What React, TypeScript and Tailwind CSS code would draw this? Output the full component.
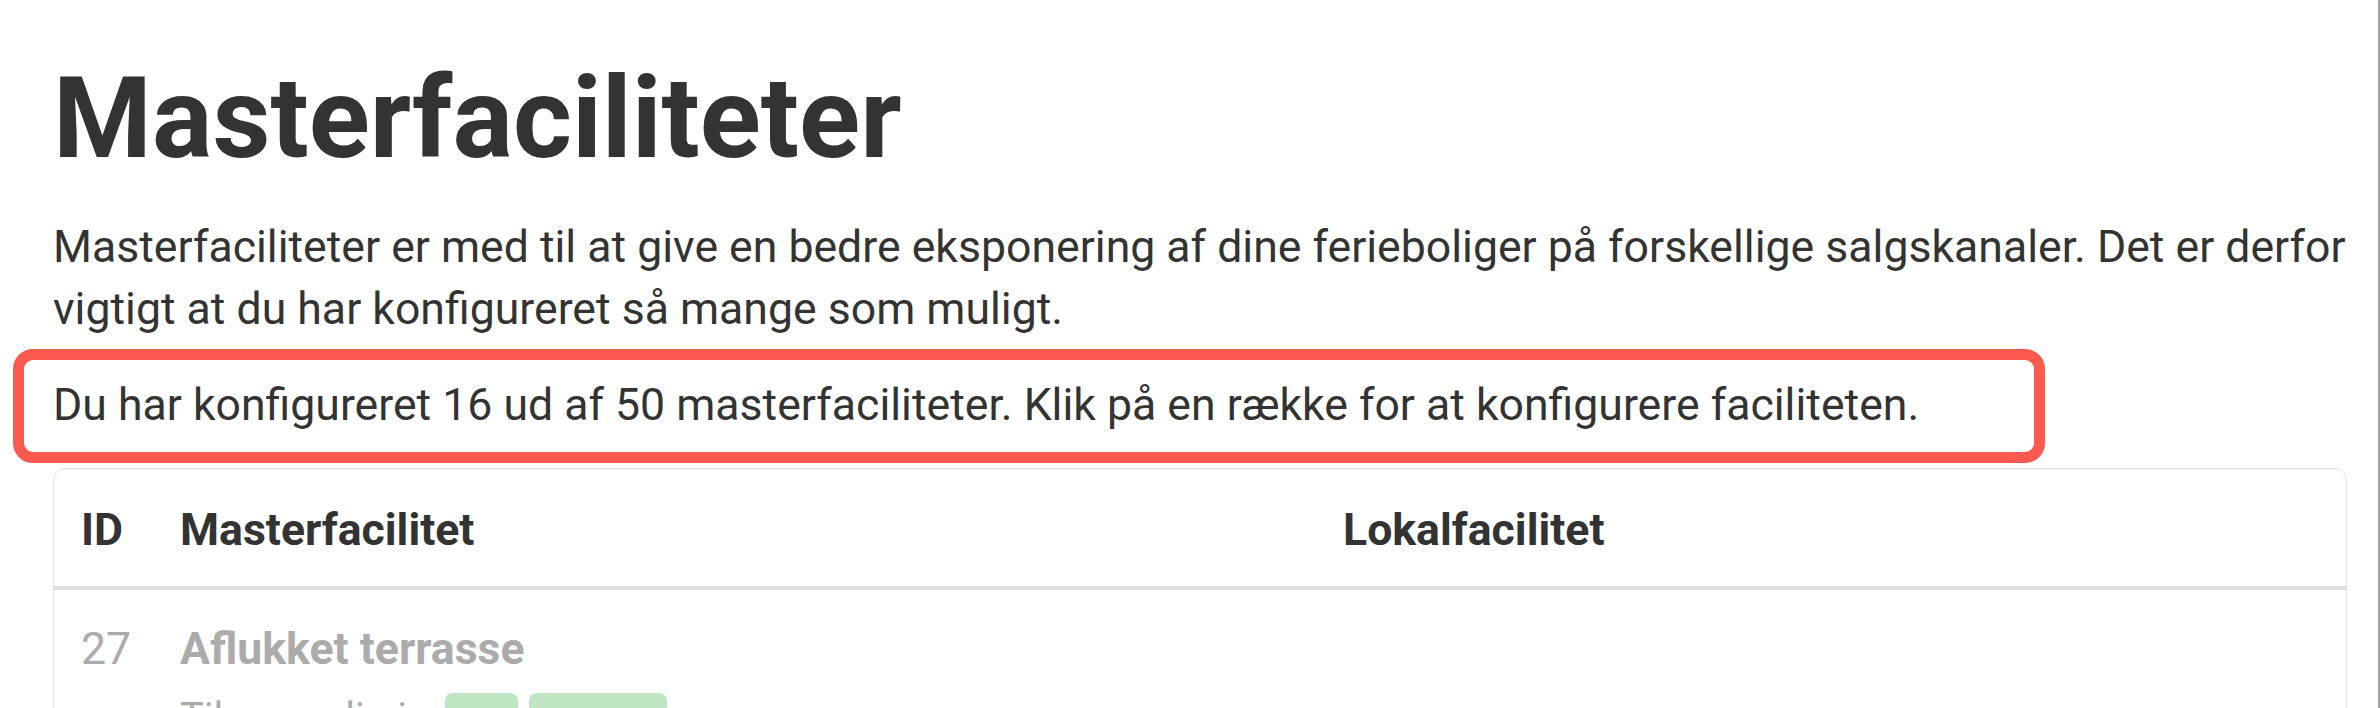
import React from 'react'

const rows = [
  {
    id: 27,
    name: 'Aflukket terrasse',
    channels: 2,
  },
]

export default function App() {
  return (
    <div className="min-h-screen w-full bg-white border-r-2 border-[#a3a3a3] text-[#333333] font-['Roboto',sans-serif] overflow-hidden">
      <div className="pl-[53px] pr-[31px]">
        <h1 className="pt-[51px] text-[113px] leading-[136px] font-bold">Masterfaciliteter</h1>

        <p className="mt-[29px] text-[44.6px] leading-[62px]">
          Masterfaciliteter er med til at give en bedre eksponering af dine ferieboliger på forskellige salgskanaler. Det er derfor vigtigt at du har konfigureret så mange som muligt.
        </p>

        {/* highlighted summary */}
        <div className="mt-[9px] ml-[-40px] w-[2032px] rounded-[20px] border-[11px] border-[#fd5a4f] pl-[29px] pt-[14px] pb-[16px]">
          <p className="text-[44.6px] leading-[62px]">
            Du har konfigureret 16 ud af 50 masterfaciliteter. Klik på en række for at konfigurere faciliteten.
          </p>
        </div>

        <div className="mt-[5px] rounded-[12px] border border-[#e2e2e2] bg-white">
          <div className="grid grid-cols-[99px_1163px_1fr] h-[121px] border-b-4 border-[#dfe1e3] pl-[27px] pt-[30px] text-[44.6px] leading-[62px] font-bold">
            <div>ID</div>
            <div>Masterfacilitet</div>
            <div>Lokalfacilitet</div>
          </div>

          {rows.map((row) => (
            <div key={row.id} className="grid grid-cols-[99px_1163px_1fr] pl-[27px] pt-[28px] pb-[20px] text-[#ababab]">
              <div className="text-[44.6px] leading-[62px]">{row.id}</div>
              <div>
                <div className="text-[44.6px] leading-[62px] font-bold">{row.name}</div>
                <div className="mt-[13px] flex items-start">
                  <span className="text-[40px] leading-[50px] mr-[28px]">Tilgængelig i:</span>
                  <span className="h-[50px] w-[73px] rounded-[8px] bg-[#bfe5c3]" />
                  <span className="ml-[11px] h-[50px] w-[138px] rounded-[8px] bg-[#bfe5c3]" />
                </div>
              </div>
              <div />
            </div>
          ))}
        </div>
      </div>
    </div>
  )
}
